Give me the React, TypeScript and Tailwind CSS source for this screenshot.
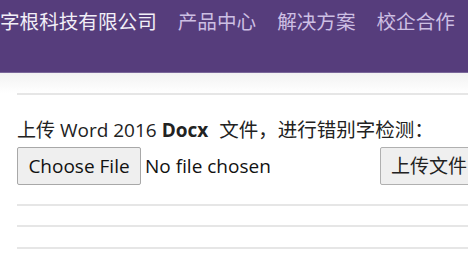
import React from "react";

export default function App() {
  const font = { fontFamily: '"Open Sans", "Noto Sans CJK SC", sans-serif' };
  return (
    <div className="w-[468px] h-[264px] overflow-hidden bg-white" style={font}>
      <div
        className="h-[73px] bg-[#563d7c] border-b border-[#7a679a] flex items-start pt-[6px] whitespace-nowrap"
        style={{ fontFamily: '"Noto Sans CJK SC", sans-serif' }}
      >
        <span className="text-[19.6px] leading-[30px] text-[#f2eff7]">字根科技有限公司</span>
        <span className="text-[19.6px] leading-[30px] text-[#cdbfe3] ml-[21px]">产品中心</span>
        <span className="text-[19.6px] leading-[30px] text-[#cdbfe3] ml-[21px]">解决方案</span>
        <span className="text-[19.6px] leading-[30px] text-[#cdbfe3] ml-[21px]">校企合作</span>
      </div>
      <div className="bg-gradient-to-b from-[#f2f2f2] to-white h-[20px]" />
      <div className="pl-[17px] w-[520px]">
        <div className="border-t-2 border-[#e6e6e6]" />
        <div className="pt-[22px] text-[19px] leading-[26px] text-[#222] whitespace-nowrap">
          上传 Word 2016 <b>Docx</b>
          <span className="ml-[11px] text-[19.5px]">文件，进行错别字检测：</span>
        </div>
        <div className="flex items-center mt-[4px] w-[473px]">
          <div className="h-[38px] w-[124px] bg-[#efefef] border border-[#a8a8a8] rounded-[2px] flex items-center justify-center text-[19px] text-[#111]">
            Choose File
          </div>
          <span className="ml-[4px] text-[19px] text-[#111]">No file chosen</span>
          <div className="ml-auto h-[38px] w-[110px] bg-[#efefef] border border-[#b0b0b0] rounded-[2px] flex items-center pl-[10px] text-[19px] text-[#222] whitespace-nowrap">
            上传文件
          </div>
        </div>
        <div className="mt-[19px] border-t-2 border-[#e6e6e6]" />
        <div className="mt-[19px] border-t-2 border-[#e6e6e6]" />
        <div className="mt-[20px] border-t-2 border-[#e6e6e6]" />
      </div>
    </div>
  );
}
